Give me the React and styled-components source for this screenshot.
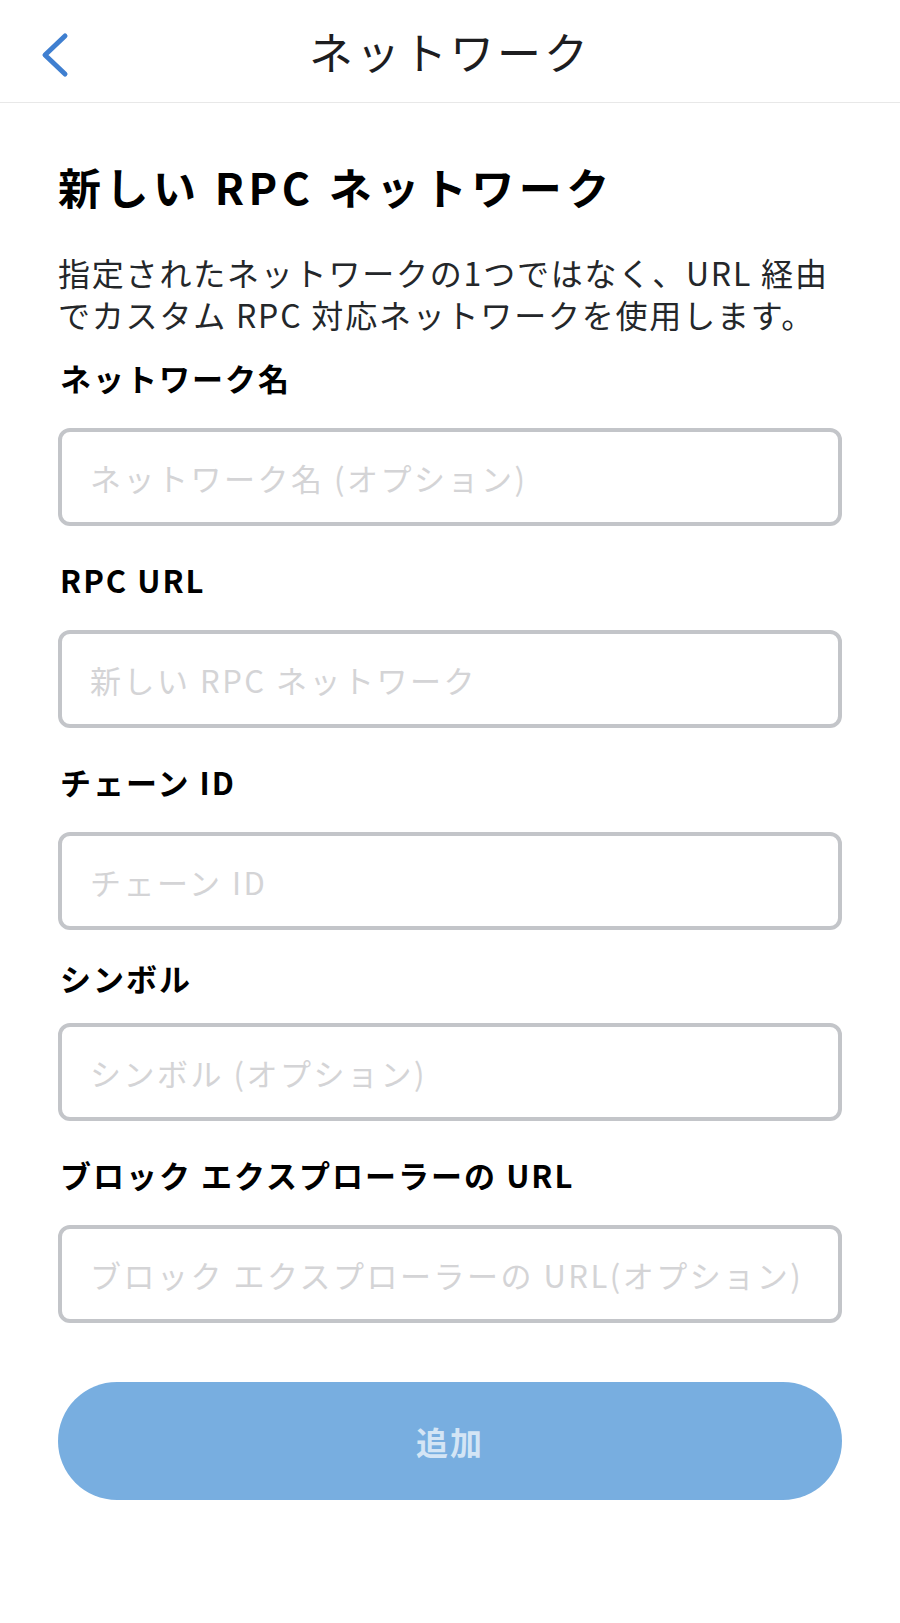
import React from 'react';
import styled, { createGlobalStyle } from 'styled-components';

const GlobalStyle = createGlobalStyle`
  html, body {
    margin: 0;
    padding: 0;
    background: #ffffff;
  }
  body {
    font-family: "Noto Sans CJK JP", "Noto Sans", sans-serif;
    color: #24272a;
  }
  * {
    box-sizing: border-box;
  }
`;

const Screen = styled.div`
  width: 900px;
  min-height: 1623px;
  background: #ffffff;
`;

const Header = styled.header`
  height: 103px;
  display: grid;
  grid-template-columns: 110px 1fr 110px;
  align-items: center;
  border-bottom: 1px solid #e8e8e8;
`;

const BackButton = styled.button`
  justify-self: start;
  margin-left: 34px;
  margin-top: 8px;
  padding: 0;
  border: 0;
  background: none;
  display: flex;
  color: #3f7fd0;
  cursor: pointer;
`;

const Title = styled.h1`
  margin: 0;
  text-align: center;
  font-size: 44px;
  line-height: 1;
  font-weight: 400;
  letter-spacing: 3px;
  color: #1d1d1f;
`;

const Content = styled.main`
  display: flex;
  flex-direction: column;
  padding: 58px 58px 120px;
`;

const Heading = styled.h2`
  margin: 0;
  font-size: 43px;
  line-height: 50px;
  font-weight: 700;
  letter-spacing: 4.5px;
  color: #000000;
`;

const Description = styled.p`
  margin: 40px 0 0;
  font-size: 32px;
  line-height: 42px;
  letter-spacing: 1.8px;
  white-space: nowrap;
  color: #24272a;
`;

const Field = styled.div`
  display: flex;
  flex-direction: column;
  margin-top: ${(p) => p.$top}px;
`;

const FieldLabel = styled.label`
  margin-bottom: ${(p) => p.$gap}px;
  padding-left: 2px;
  font-size: 31px;
  line-height: 40px;
  font-weight: 700;
  letter-spacing: 2px;
  color: #000000;
`;

const TextInput = styled.input`
  width: 100%;
  height: 98px;
  padding: 0 28px;
  border: 4px solid #c3c5c9;
  border-radius: 12px;
  background: #ffffff;
  font-family: inherit;
  font-size: 31px;
  letter-spacing: 2.5px;
  color: #24272a;
  outline: none;

  &::placeholder {
    color: #d4d4d6;
  }
`;

const SubmitButton = styled.button`
  margin-top: 59px;
  height: 118px;
  border: 0;
  border-radius: 59px;
  background: #78aee0;
  font-family: inherit;
  font-size: 32px;
  font-weight: 700;
  letter-spacing: 2px;
  color: #d4e5f5;
  cursor: default;
`;

const ChevronLeft = () => (
  <svg width="40" height="60" viewBox="0 0 40 60" fill="none">
    <path
      d="M31 11 L11 30 L31 49"
      stroke="currentColor"
      strokeWidth="5"
      strokeLinecap="round"
      strokeLinejoin="round"
    />
  </svg>
);

const fields = [
  { id: 'name', label: 'ネットワーク名', placeholder: 'ネットワーク名 (オプション)', top: 23, gap: 30 },
  { id: 'rpc', label: 'RPC URL', placeholder: '新しい RPC ネットワーク', top: 34, gap: 30 },
  { id: 'chain', label: 'チェーン ID', placeholder: 'チェーン ID', top: 34, gap: 30 },
  { id: 'symbol', label: 'シンボル', placeholder: 'シンボル (オプション)', top: 28, gap: 25 },
  { id: 'explorer', label: 'ブロック エクスプローラーの URL', placeholder: 'ブロック エクスプローラーの URL(オプション)', top: 34, gap: 30 },
];

export default function App() {
  return (
    <Screen>
      <GlobalStyle />
      <Header>
        <BackButton aria-label="戻る">
          <ChevronLeft />
        </BackButton>
        <Title>ネットワーク</Title>
        <span />
      </Header>
      <Content>
        <Heading>新しい RPC ネットワーク</Heading>
        <Description>
          指定されたネットワークの1つではなく、URL 経由
          <br />
          でカスタム RPC 対応ネットワークを使用します。
        </Description>
        {fields.map((f) => (
          <Field key={f.id} $top={f.top}>
            <FieldLabel htmlFor={f.id} $gap={f.gap}>{f.label}</FieldLabel>
            <TextInput id={f.id} placeholder={f.placeholder} />
          </Field>
        ))}
        <SubmitButton disabled>追加</SubmitButton>
      </Content>
    </Screen>
  );
}
